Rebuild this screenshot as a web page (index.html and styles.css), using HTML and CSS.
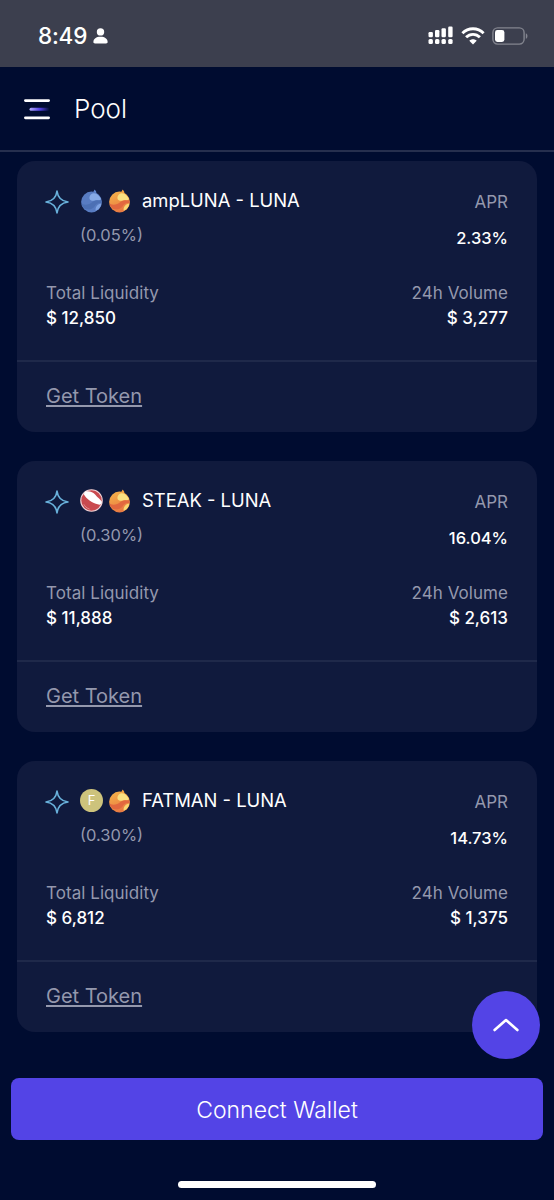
FILE: index.html
```html
<!DOCTYPE html>
<html lang="en">
<head>
    <meta charset="UTF-8">
    <meta name="viewport" content="width=device-width, initial-scale=1.0">
    <title>Pool</title>
    <link rel="stylesheet" href="styles.css">
</head>
<body>
    <!-- shared icons -->
    <svg class="defs" width="0" height="0">
        <defs>
            <linearGradient id="menuFade" x1="0" x2="1" y1="0" y2="0">
                <stop offset="0" stop-color="#b5aefc"/>
                <stop offset="0.5" stop-color="#5643e8"/>
                <stop offset="1" stop-color="#5643e8" stop-opacity="0"/>
            </linearGradient>
            <linearGradient id="lunaFire" x1="0" x2="0.4" y1="0" y2="1">
                <stop offset="0" stop-color="#f8b64a"/>
                <stop offset="1" stop-color="#e87a42"/>
            </linearGradient>
        </defs>
        <symbol id="star" viewBox="0 0 24 24">
            <path d="M12 1C12.8 7.6 16.4 11.2 23 12C16.4 12.8 12.8 16.4 12 23C11.2 16.4 7.6 12.8 1 12C7.6 11.2 11.2 7.6 12 1Z" fill="none" stroke="#69b2dc" stroke-width="1.6" stroke-linejoin="round"/>
        </symbol>
        <symbol id="luna" viewBox="0 0 22 24">
            <path d="M10.5 3.2C13 3.2 14.3 2 13.4 0.4C15.6 1 16.2 2.8 15.6 4.4Z" fill="#f2a23e"/>
            <circle cx="11" cy="13" r="10.4" fill="url(#lunaFire)"/>
            <path d="M11 5C13 3 18 5 20.2 9.2C20.8 11 19.5 11.8 17 11.2C14.6 10.8 13 12.4 10.8 11.6C8.2 10.6 8.4 7 11 5Z" fill="#fbe080"/>
            <path d="M1 14.5C5 17 9 15.4 11.6 13.2C14.4 11 17.6 11 20.8 11.4L21 14C17 13.4 15.2 15.4 14 17.6C12.4 20.2 9 21 5 20C2.6 18.8 1.2 16.6 1 14.5Z" fill="#e2683f"/>
            <path d="M21 14.4C20.4 18 18 20.8 15.2 21.8C14.4 18.4 17 14.6 21 14.4Z" fill="#f9d872"/>
        </symbol>
        <symbol id="ampluna" viewBox="0 0 22 24">
            <path d="M10.5 3.2C13 3.2 14.3 2 13.4 0.4C15.6 1 16.2 2.8 15.6 4.4Z" fill="#6088cf"/>
            <circle cx="11" cy="13" r="10.4" fill="#587cc2"/>
            <path d="M11 5C13 3 18 5 20.2 9.2C20.8 11 19.5 11.8 17 11.2C14.6 10.8 13 12.4 10.8 11.6C8.2 10.6 8.4 7 11 5Z" fill="#86aae6"/>
            <path d="M1 14.5C5 17 9 15.4 11.6 13.2C14.4 11 17.6 11 20.8 11.4L21 14C17 13.4 15.2 15.4 14 17.6C12.4 20.2 9 21 5 20C2.6 18.8 1.2 16.6 1 14.5Z" fill="#4c70b4"/>
            <path d="M21 14.4C20.4 18 18 20.8 15.2 21.8C14.4 18.4 17 14.6 21 14.4Z" fill="#7ea3e2"/>
        </symbol>
        <symbol id="steak" viewBox="0 0 24 24">
            <circle cx="12" cy="12" r="11.2" fill="#c94a4f" stroke="#eecfd2" stroke-width="1.2"/>
            <path d="M5 2.8C9 1.6 13.5 2.8 16 6C18.2 9 21.2 10.4 22.8 13.4C22.8 16 21 17 18.5 16C13.5 14.6 6.5 10.6 4 5.4Z" fill="#fff"/>
            <path d="M4 16C5 18 7 20 10 21" fill="none" stroke="#e29a9e" stroke-width="0.9"/>
        </symbol>
    </svg>

    <div class="status-bar">
        <div class="status-left">
            <span class="time">8:49</span>
            <svg width="15" height="16" viewBox="0 0 15 16" fill="#fff">
                <circle cx="7.5" cy="3.9" r="3.7"/>
                <path d="M0.4 14C0.4 10.8 3.2 8.8 7.5 8.8S14.6 10.8 14.6 14C14.6 15 14 15.4 13 15.4H2C1 15.4 0.4 15 0.4 14Z"/>
            </svg>
        </div>
        <div class="status-right">
            <svg width="26" height="19" viewBox="0 0 26 19" fill="#fff">
                <rect x="0.5" y="6" width="4.4" height="5.2" rx="1.2"/>
                <rect x="7" y="4" width="4.4" height="7.2" rx="1.2"/>
                <rect x="13.5" y="2.2" width="4.4" height="9" rx="1.2"/>
                <rect x="20.2" y="0.5" width="4.4" height="10.7" rx="1.2"/>
                <rect x="0.5" y="13" width="4.4" height="5" rx="1.5"/>
                <rect x="7" y="13" width="4.4" height="5" rx="1.5"/>
                <rect x="13.5" y="13" width="4.4" height="5" rx="1.5"/>
                <rect x="20.2" y="13" width="4.4" height="5" rx="1.5"/>
            </svg>
            <svg class="wifi" width="24" height="18" viewBox="0 0 24 18" fill="none" stroke="#fff" stroke-width="2.9">
                <path d="M1.4 6.2C7.3 0.3 16.7 0.3 22.6 6.2"/>
                <path d="M5.1 10.3C9 6.4 15 6.4 18.9 10.3"/>
                <path d="M8.3 13.7C10.3 11.7 13.7 11.7 15.7 13.7L12 17.4Z" fill="#fff" stroke="none"/>
            </svg>
            <svg class="battery" width="36" height="18" viewBox="0 0 36 18">
                <rect x="0.9" y="0.9" width="31.2" height="16.2" rx="4.8" fill="none" stroke="#83858f" stroke-width="1.4"/>
                <rect x="3" y="3" width="9.4" height="12" rx="2.4" fill="#fff"/>
                <path d="M33.8 6.2C36 7 36 11 33.8 11.8Z" fill="#83858f"/>
            </svg>
        </div>
    </div>

    <header class="header">
        <svg width="26" height="22" viewBox="0 0 26 22">
            <rect x="0" y="1.2" width="26" height="2.8" rx="1.4" fill="#fff"/>
            <rect x="5.5" y="9.8" width="20" height="3" rx="1.5" fill="url(#menuFade)"/>
            <rect x="0" y="18.4" width="26" height="2.8" rx="1.4" fill="#fff"/>
        </svg>
        <h1>Pool</h1>
    </header>

    <main class="pools">
        <section class="card">
            <div class="card-top">
                <div class="pair">
                    <svg class="star"><use href="#star"/></svg>
                    <svg class="token luna"><use href="#ampluna"/></svg>
                    <svg class="token luna"><use href="#luna"/></svg>
                    <h2>ampLUNA - LUNA</h2>
                </div>
                <span class="label">APR</span>
            </div>
            <div class="card-rate">
                <span class="fee">(0.05%)</span>
                <span class="value">2.33%</span>
            </div>
            <div class="stats">
                <div>
                    <p class="label">Total Liquidity</p>
                    <p class="value">$ 12,850</p>
                </div>
                <div class="right">
                    <p class="label">24h Volume</p>
                    <p class="value">$ 3,277</p>
                </div>
            </div>
            <div class="card-footer"><a href="#">Get Token</a></div>
        </section>

        <section class="card">
            <div class="card-top">
                <div class="pair">
                    <svg class="star"><use href="#star"/></svg>
                    <svg class="token"><use href="#steak"/></svg>
                    <svg class="token luna"><use href="#luna"/></svg>
                    <h2>STEAK - LUNA</h2>
                </div>
                <span class="label">APR</span>
            </div>
            <div class="card-rate">
                <span class="fee">(0.30%)</span>
                <span class="value">16.04%</span>
            </div>
            <div class="stats">
                <div>
                    <p class="label">Total Liquidity</p>
                    <p class="value">$ 11,888</p>
                </div>
                <div class="right">
                    <p class="label">24h Volume</p>
                    <p class="value">$ 2,613</p>
                </div>
            </div>
            <div class="card-footer"><a href="#">Get Token</a></div>
        </section>

        <section class="card">
            <div class="card-top">
                <div class="pair">
                    <svg class="star"><use href="#star"/></svg>
                    <span class="token fatman">F</span>
                    <svg class="token luna"><use href="#luna"/></svg>
                    <h2>FATMAN - LUNA</h2>
                </div>
                <span class="label">APR</span>
            </div>
            <div class="card-rate">
                <span class="fee">(0.30%)</span>
                <span class="value">14.73%</span>
            </div>
            <div class="stats">
                <div>
                    <p class="label">Total Liquidity</p>
                    <p class="value">$ 6,812</p>
                </div>
                <div class="right">
                    <p class="label">24h Volume</p>
                    <p class="value">$ 1,375</p>
                </div>
            </div>
            <div class="card-footer"><a href="#">Get Token</a></div>
        </section>
    </main>

    <button class="to-top" aria-label="Back to top">
        <svg width="26" height="14" viewBox="0 0 26 14" fill="none" stroke="#fff" stroke-width="2.6" stroke-linecap="round" stroke-linejoin="round">
            <path d="M1.6 12L13 2L24.4 12"/>
        </svg>
    </button>

    <footer class="dock">
        <button class="connect">Connect Wallet</button>
        <div class="home-indicator"></div>
    </footer>
</body>
</html>
```
FILE: styles.css
```css
* {
    margin: 0;
    padding: 0;
    box-sizing: border-box;
}

body {
    font-family: Inter, 'Liberation Sans', sans-serif;
    background: #000c30;
    color: #fff;
    height: 1200px;
    display: flex;
    flex-direction: column;
    overflow: hidden;
}

svg {
    display: block;
    flex-shrink: 0;
}

.defs {
    position: absolute;
}

.status-bar {
    height: 67px;
    background: #3c3f4e;
    display: flex;
    justify-content: space-between;
    padding: 24px 26px 0 38px;
}

.status-left,
.status-right {
    display: flex;
    height: 23px;
    align-items: center;
}

.status-left {
    gap: 6px;
}

.time {
    font-size: 22.5px;
    font-weight: 500;
    letter-spacing: -0.2px;
    line-height: 22px;
}

.wifi {
    margin-left: 7px;
}

.battery {
    margin-left: 7px;
}

.header {
    height: 85px;
    border-bottom: 2px solid #262f4e;
    display: flex;
    align-items: center;
    gap: 24px;
    padding-left: 24px;
}

.header h1 {
    font-size: 26px;
    font-weight: 300;
    letter-spacing: 0;
}

.pools {
    padding: 9px 17px 0;
    display: flex;
    flex-direction: column;
    gap: 29px;
}

.card {
    height: 271px;
    background: #101a3d;
    border-radius: 18px;
    padding-top: 26px;
}

.card-top,
.card-rate,
.stats {
    display: flex;
    justify-content: space-between;
    padding: 0 29px;
}

.card-top {
    height: 28px;
    align-items: center;
}

.card-top .label {
    margin-top: 2px;
}

.pair {
    display: flex;
    align-items: center;
    margin-left: -1px;
}

.star {
    width: 24px;
    height: 24px;
    margin-right: 11px;
    margin-top: 1px;
}

.token {
    width: 23px;
    height: 23px;
    margin-right: 5px;
    margin-top: -1px;
}

.luna {
    height: 24px;
}

.fatman {
    border-radius: 50%;
    background: #cdc37c;
    font-size: 13px;
    line-height: 23px;
    text-align: center;
}

.pair h2 {
    font-size: 18.4px;
    font-weight: 400;
    line-height: 26px;
    margin: -2px 0 0 6px;
}

.label,
.fee {
    color: #9498ad;
    font-size: 17px;
}

.fee {
    font-size: 16.5px;
    line-height: 41px;
}

.value {
    font-size: 16.5px;
    font-weight: 450;
    line-height: 46px;
}

.card-rate {
    height: 46px;
    padding-left: 63px;
}

.stats {
    margin-top: 19px;
    height: 80px;
}

.stats .label {
    font-size: 17px;
    line-height: 26px;
    letter-spacing: 0.05px;
}

.stats .value {
    font-size: 17px;
    line-height: 24px;
}

.right {
    text-align: right;
}

.card-footer {
    border-top: 2px solid #1f294a;
    padding: 20px 29px;
    line-height: 28px;
}

.card-footer a {
    color: #9498ad;
    font-size: 20px;
    text-underline-offset: 2px;
}

.to-top {
    position: fixed;
    right: 14px;
    bottom: 141px;
    width: 68px;
    height: 68px;
    border: none;
    border-radius: 50%;
    background: #5344e6;
    display: flex;
    align-items: center;
    justify-content: center;
}

.dock {
    margin-top: auto;
    padding: 0 11px 12px;
}

.connect {
    width: 100%;
    height: 62px;
    border: none;
    border-radius: 8px;
    background: #5344e6;
    color: #fff;
    font-family: inherit;
    font-size: 23px;
    font-weight: 300;
    line-height: 64px;
}

.home-indicator {
    width: 198px;
    height: 7px;
    margin: 41px auto 0;
    border-radius: 4px;
    background: #fff;
}
```
